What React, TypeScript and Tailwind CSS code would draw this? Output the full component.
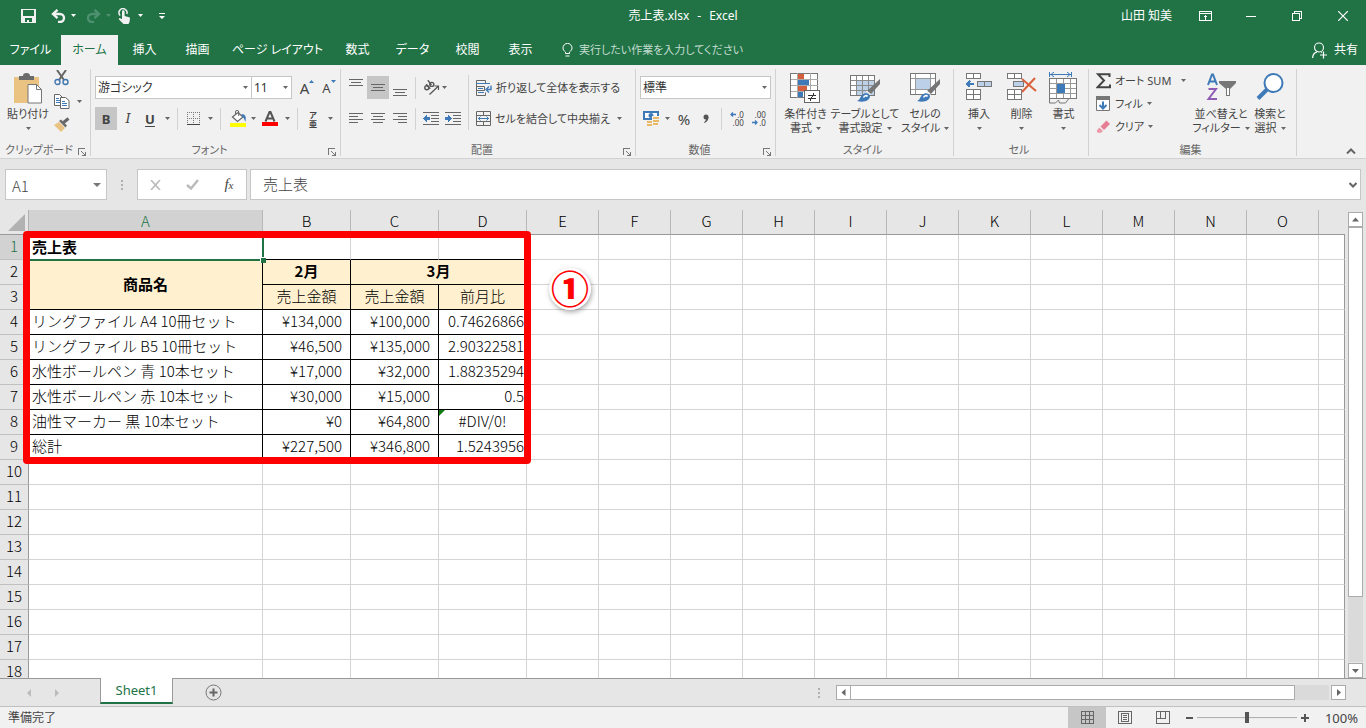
import React from 'react';

const COLUMNS = ['A', 'B', 'C', 'D', 'E', 'F', 'G', 'H', 'I', 'J', 'K', 'L', 'M', 'N', 'O'];

const PRODUCTS = [
  { name: 'リングファイル A4 10冊セット', feb: '¥134,000', mar: '¥100,000', ratio: '0.74626866' },
  { name: 'リングファイル B5 10冊セット', feb: '¥46,500', mar: '¥135,000', ratio: '2.90322581' },
  { name: '水性ボールペン 青 10本セット', feb: '¥17,000', mar: '¥32,000', ratio: '1.88235294' },
  { name: '水性ボールペン 赤 10本セット', feb: '¥30,000', mar: '¥15,000', ratio: '0.5' },
  { name: '油性マーカー 黒 10本セット', feb: '¥0', mar: '¥64,800', ratio: '#DIV/0!' },
  { name: '総計', feb: '¥227,500', mar: '¥346,800', ratio: '1.5243956' },
];

const RIBBON_TABS = [
  { name: 'ファイル', width: 'w-[61px]' },
  { name: 'ホーム', width: 'w-[57px]' },
  { name: '挿入', width: 'w-[53px]' },
  { name: '描画', width: 'w-[53px]' },
  { name: 'ページ レイアウト', width: 'w-[107px]' },
  { name: '数式', width: 'w-[53px]' },
  { name: 'データ', width: 'w-[57px]' },
  { name: '校閲', width: 'w-[53px]' },
  { name: '表示', width: 'w-[53px]' },
];

type IconProps = { w: number; h: number; crisp?: boolean; className?: string; children: React.ReactNode };

function Icon({ w, h, crisp, className = '', children }: IconProps) {
  return (
    <svg
      width={w}
      height={h}
      viewBox={`0 0 ${w} ${h}`}
      fill="none"
      shapeRendering={crisp ? 'crispEdges' : 'auto'}
      className={`shrink-0 ${className}`}
      aria-hidden="true"
    >
      {children}
    </svg>
  );
}

function Caret({ className = 'text-[#666]' }: { className?: string }) {
  return (
    <Icon w={5} h={3} className={className}>
      <path d="M0 0h5L2.5 3z" fill="currentColor" />
    </Icon>
  );
}

function CaretButton({ label, className = '' }: { label: string; className?: string }) {
  return (
    <button aria-label={label} className={`flex h-full w-3 shrink-0 items-center justify-center ${className}`}>
      <Caret />
    </button>
  );
}

function ToolButton({
  label,
  active,
  className = 'w-[22px]',
  children,
}: {
  label: string;
  active?: boolean;
  className?: string;
  children: React.ReactNode;
}) {
  return (
    <button
      aria-label={label}
      className={`flex h-[23px] shrink-0 items-center justify-center ${active ? 'bg-[#c6c6c6]' : ''} ${className}`}
    >
      {children}
    </button>
  );
}

function Separator({ className = '' }: { className?: string }) {
  return <span className={`h-[22px] w-px shrink-0 bg-[#d2d2d2] ${className}`} />;
}

function Group({
  label,
  launcher,
  className,
  children,
}: {
  label: string;
  launcher?: boolean;
  className: string;
  children: React.ReactNode;
}) {
  return (
    <section aria-label={label} className={`flex h-[87px] shrink-0 flex-col border-r border-[#d2d2d2] ${className}`}>
      <div className="flex-1">{children}</div>
      <div className="flex h-3 items-center pr-1 leading-3 text-[#666]">
        <span className="flex-1 text-center">{label}</span>
        {launcher && (
          <button aria-label={`${label}の設定`}>
            <Icon w={8} h={8} crisp className="mt-1">
              <path d="M0 7V0h7M3 3l4 4M7.5 4v3.5H4" stroke="#777" />
            </Icon>
          </button>
        )}
      </div>
    </section>
  );
}

function BigButton({
  lines,
  className,
  children,
}: {
  lines: string[];
  className: string;
  children: React.ReactNode;
}) {
  const single = lines.length === 1;
  return (
    <button className={`flex shrink-0 flex-col items-center pt-[3px] leading-[14px] whitespace-nowrap ${className}`}>
      <span className="mb-[3px] flex h-8 items-start justify-center">{children}</span>
      <span>{lines[0]}</span>
      <span className="flex h-[14px] items-center gap-1">
        {!single && lines[1]}
        <Caret />
      </span>
    </button>
  );
}

function SelectBox({ label, value, className }: { label: string; value: string; className: string }) {
  return (
    <div className={`relative h-[23px] shrink-0 ${className}`}>
      <select
        aria-label={label}
        defaultValue={value}
        className="h-full w-full appearance-none border border-[#c6c6c6] bg-white pl-[2px] text-[12px] leading-5 text-[#333]"
      >
        <option>{value}</option>
      </select>
      <Caret className="pointer-events-none absolute top-[10px] right-1 text-[#666]" />
    </div>
  );
}

function TitleBar() {
  return (
    <header className="flex h-[35px] items-center text-white">
      <div className="flex flex-1 items-center pb-1">
        <button aria-label="上書き保存" className="ml-[21px]">
          <Icon w={15} h={14} crisp>
            <path d="M0 0h15v14H0z" fill="#f1f1f1" />
            <path d="M2 1h11v6H2zM4 9h7v4H4z" fill="#217346" />
            <path d="M6 11h2v2H6z" fill="#f1f1f1" />
          </Icon>
        </button>
        <button aria-label="元に戻す" className="ml-[15px]">
          <Icon w={15} h={14}>
            <path d="M2 5h7a4 4 0 0 1 0 8H7" stroke="#f1f1f1" strokeWidth="2.4" />
            <path d="M6.5 0.8L2 5l4.5 4.2" stroke="#f1f1f1" strokeWidth="2.4" />
          </Icon>
        </button>
        <Caret className="ml-[5px] text-white" />
        <button aria-label="やり直し" className="ml-[10px]">
          <Icon w={15} h={14}>
            <path d="M13 5H6a4 4 0 0 0 0 8h2" stroke="#4e9170" strokeWidth="2.4" />
            <path d="M8.5 0.8L13 5 8.5 9.2" stroke="#4e9170" strokeWidth="2.4" />
          </Icon>
        </button>
        <Caret className="ml-[5px] text-[#4e9170]" />
        <button aria-label="タッチ/マウス モードの切り替え" className="ml-[7px]">
          <Icon w={13} h={16}>
            <path d="M2.2 7.5A4 4 0 1 1 8.8 6" stroke="#f1f1f1" strokeWidth="1.5" />
            <path
              d="M4 3.5a1.3 1.3 0 0 1 2.6 0V8l4.5 1.2c.7.2 1 .7.9 1.5L11.5 14 10.5 16H5.5L1 11.500c-.5-.7.4-1.7 1.2-1.3L4 11.3z"
              fill="#f1f1f1"
            />
          </Icon>
        </button>
        <Caret className="ml-[7px] text-white" />
        <button aria-label="クイック アクセス ツール バーのカスタマイズ" className="ml-4">
          <Icon w={6} h={6}>
            <path d="M0 3h6L3 6zM0 0h6v1H0z" fill="#fff" />
          </Icon>
        </button>
      </div>
      <h1 className="flex gap-2 pb-1">
        <span>売上表.xlsx</span>
        <span>-</span>
        <span>Excel</span>
      </h1>
      <div className="flex flex-1 items-center justify-end pb-1">
        <span className="mr-[10px]">山田 知美</span>
        <button aria-label="リボンの表示オプション" className="flex w-[46px] justify-center">
          <Icon w={13} h={10} crisp>
            <path d="M.5.5h12v9H.5zM.5 2.5h12" stroke="#fff" />
            <path d="M6.5 9V4.5M4.5 6.5l2-2 2 2" stroke="#fff" />
          </Icon>
        </button>
        <button aria-label="最小化" className="flex w-[46px] justify-center">
          <Icon w={10} h={10} crisp>
            <path d="M0 5.5h10" stroke="#fff" />
          </Icon>
        </button>
        <button aria-label="元のサイズに戻す" className="flex w-[46px] justify-center">
          <Icon w={10} h={10} crisp>
            <path d="M.5 2.5h7v7h-7zM2.5 2V.5h7v7H8" stroke="#fff" />
          </Icon>
        </button>
        <button aria-label="閉じる" className="flex w-[46px] justify-center">
          <Icon w={10} h={10}>
            <path d="M0 0l10 10M10 0L0 10" stroke="#fff" strokeWidth="1.2" />
          </Icon>
        </button>
      </div>
    </header>
  );
}

function TabBar() {
  return (
    <nav className="flex h-[30px] items-center text-white">
      {RIBBON_TABS.map((tab) => (
        <button
          key={tab.name}
          className={`h-full shrink-0 whitespace-nowrap ${tab.width} ${tab.name === 'ホーム' ? 'bg-[#f1f1f1] text-[#217346]' : ''}`}
        >
          {tab.name}
        </button>
      ))}
      <button className="ml-[15px] flex items-center gap-[6px] text-[11px] text-[#c3dccf]">
        <Icon w={11} h={14}>
          <path d="M3.5 10.5V9C2 7.8 1 6.8 1 4.9a4.4 4.4 0 0 1 9 0c0 1.9-1 2.9-2.5 4.1v1.5zM3.5 13h4" stroke="#fff" />
        </Icon>
        実行したい作業を入力してください
      </button>
      <button className="mr-2 ml-auto flex items-center gap-[7px]">
        <Icon w={15} h={17}>
          <circle cx="7" cy="5.5" r="4.5" stroke="#fff" strokeWidth="1.1" />
          <path d="M.6 16c.2-3.5 1.9-5.5 4.4-6.2M9 9.8l1 .6M11.5 9.500v7M8 13h7" stroke="#fff" strokeWidth="1.2" />
        </Icon>
        共有
      </button>
    </nav>
  );
}

function ClipboardGroup() {
  return (
    <Group label="クリップボード" launcher className="w-[91px]">
      <div className="flex pl-1">
        <BigButton lines={['貼り付け']} className="w-12">
          <Icon w={30} h={32}>
            <path d="M1 5h25v26H1z" fill="#eac282" />
            <path d="M6 4h4c0-2 1-3 3.5-3S17 2 17 4h4v4H6z" fill="#6b6b6b" />
            <path d="M15 12.5h8.5l5 5V31H15z" fill="#fff" stroke="#777" />
            <path d="M23.5 12.5v5h5" stroke="#777" />
          </Icon>
        </BigButton>
        <div className="flex flex-col gap-[7px] pt-[1px]">
          <button aria-label="切り取り" className="ml-[2px] flex h-4 w-5 items-center">
            <Icon w={15} h={16}>
              <path d="M3 0l7 10M12 0L5 10" stroke="#666" strokeWidth="2" />
              <circle cx="3.5" cy="12" r="2.5" stroke="#4177b0" strokeWidth="1.4" />
              <circle cx="11.5" cy="12" r="2.5" stroke="#4177b0" strokeWidth="1.4" />
            </Icon>
          </button>
          <div className="flex h-4 items-center gap-[7px]">
            <button aria-label="コピー" className="ml-[2px]">
              <Icon w={16} h={15}>
                <path d="M.5.5h5l3 3v8h-8z" fill="#fff" stroke="#666" />
                <path d="M2 4.5h3M2 6.5h4M2 8.5h4" stroke="#3f7ab8" />
                <path d="M6.5 3.5h5l3.5 3v8H6.5z" fill="#fff" stroke="#666" />
                <path d="M8 7.5h3M8 9.5h5M8 11.5h5" stroke="#3f7ab8" />
              </Icon>
            </button>
            <CaretButton label="コピーのオプション" className="-ml-1" />
          </div>
          <button aria-label="書式のコピー/貼り付け" className="ml-[2px] flex h-4 w-5 items-center">
            <Icon w={16} h={15}>
              <path d="M0 8l5-3 6 6-4 4z" fill="#eac282" />
              <path d="M5 4l2-1.5 6 6L11.5 10.5z" fill="#6b6b6b" />
              <path d="M9.5 5.5l5-4" stroke="#666" strokeWidth="3" />
            </Icon>
          </button>
        </div>
      </div>
    </Group>
  );
}

function FontGroup() {
  return (
    <Group label="フォント" launcher className="w-[250px]">
      <div className="flex flex-col gap-2 pt-[7px] pl-1">
        <div className="flex items-center">
          <SelectBox label="フォント" value="游ゴシック" className="w-[157px]" />
          <SelectBox label="フォント サイズ" value="11" className="-ml-px w-[41px]" />
          <ToolButton label="フォント サイズの拡大" className="ml-1 w-[22px]">
            <span className="text-[15px]">A</span>
            <Icon w={5} h={3} className="mb-3">
              <path d="M0 3h5L2.5 0z" fill="#3f7ab8" />
            </Icon>
          </ToolButton>
          <ToolButton label="フォント サイズの縮小">
            <span className="text-[13px]">A</span>
            <Icon w={5} h={3} className="mb-3">
              <path d="M0 0h5L2.5 3z" fill="#3f7ab8" />
            </Icon>
          </ToolButton>
        </div>
        <div className="flex h-[23px] items-center">
          <ToolButton label="太字" active>
            <span className="text-[13px] font-bold">B</span>
          </ToolButton>
          <ToolButton label="斜体">
            <span className="font-['DejaVu_Serif',serif] text-[13px] italic">I</span>
          </ToolButton>
          <ToolButton label="下線">
            <span className="text-[13px] leading-[14px] font-bold underline underline-offset-2">U</span>
          </ToolButton>
          <CaretButton label="下線のオプション" />
          <Separator className="mx-1" />
          <ToolButton label="罫線">
            <Icon w={13} h={13} crisp>
              <path d="M.5 0v12M6.5 0v12M12.5 0v12M0 .5h13M0 6.5h13" stroke="#777" strokeDasharray="1 1" />
              <path d="M0 12.5h13" stroke="#444" />
            </Icon>
          </ToolButton>
          <CaretButton label="罫線のオプション" />
          <Separator className="mx-1" />
          <ToolButton label="塗りつぶしの色" className="w-[26px]">
            <Icon w={17} h={17}>
              <path d="M2.5 7L8 2.5l5 4.5-5.5 4.5z" fill="#fff" stroke="#666" strokeWidth="1.2" />
              <path d="M5.5 5V2a1.600 1.600 0 0 1 3.200 0v4" stroke="#666" />
              <path d="M11.500 4c4 0 5 3 4 7.500-1-.5-1-3.500-3-4.500z" fill="#3f7ab8" />
              <path d="M0 13h16v4H0z" fill="#ff0" />
            </Icon>
          </ToolButton>
          <CaretButton label="塗りつぶしのオプション" className="-ml-1" />
          <ToolButton label="フォントの色">
            <Icon w={16} h={15}>
              <path d="M3.5 10.5L7.5 1h1l4 9.5M5 7.5h6" stroke="#555" strokeWidth="2" />
              <path d="M0 11h16v4H0z" fill="#f00" />
            </Icon>
          </ToolButton>
          <CaretButton label="フォントの色のオプション" />
          <Separator className="mx-1" />
          <ToolButton label="ふりがなの表示">
            <span className="flex flex-col items-center text-[8px] leading-[9px] font-bold">
              <span>ア</span>
              <span>亜</span>
            </span>
          </ToolButton>
          <CaretButton label="ふりがなのオプション" />
        </div>
      </div>
    </Group>
  );
}

function AlignmentGroup() {
  return (
    <Group label="配置" launcher className="w-[295px]">
      <div className="flex pl-1">
        <div className="flex flex-col gap-2 pt-[7px]">
          <div className="flex h-[23px] items-center">
            <ToolButton label="上揃え">
              <Icon w={14} h={17} crisp>
                <path d="M0 .5h14M2 3.5h10M0 6.5h14" stroke="#666" />
              </Icon>
            </ToolButton>
            <ToolButton label="上下中央揃え" active>
              <Icon w={14} h={8} crisp>
                <path d="M0 .5h14M2 3.5h10M0 6.5h14" stroke="#666" />
              </Icon>
            </ToolButton>
            <ToolButton label="下揃え">
              <Icon w={14} h={17} crisp>
                <path d="M0 10.5h14M2 13.5h10M0 16.5h14" stroke="#666" />
              </Icon>
            </ToolButton>
            <Separator className="mx-1" />
            <ToolButton label="方向">
              <Icon w={17} h={16}>
                <g stroke="#555" strokeWidth="1.4">
                  <circle cx="3.800" cy="7.800" r="2" />
                  <path d="M3.200 4.200l4 4.600" />
                  <circle cx="8.800" cy="4.400" r="2" />
                  <path d="M4.800.2l3.600 4.800" />
                  <path d="M6.500 14.500L15 6.500M11.500 6H15.500V10" strokeWidth="1.200" />
                </g>
              </Icon>
            </ToolButton>
            <CaretButton label="方向のオプション" className="-ml-1" />
          </div>
          <div className="flex h-[23px] items-center">
            <ToolButton label="左揃え">
              <Icon w={14} h={11} crisp>
                <path d="M0 .5h14M0 3.5h9M0 6.5h14M0 9.5h9" stroke="#666" />
              </Icon>
            </ToolButton>
            <ToolButton label="中央揃え">
              <Icon w={14} h={11} crisp>
                <path d="M0 .5h14M2 3.5h10M0 6.5h14M2 9.5h10" stroke="#666" />
              </Icon>
            </ToolButton>
            <ToolButton label="右揃え">
              <Icon w={14} h={11} crisp>
                <path d="M0 .5h14M5 3.5h9M0 6.5h14M5 9.5h9" stroke="#666" />
              </Icon>
            </ToolButton>
            <Separator className="mx-1" />
            <ToolButton label="インデントを減らす">
              <Icon w={16} h={13} crisp>
                <path d="M0 .5h16M8 3.5h8M8 6.5h8M8 9.5h8M0 12.5h16" stroke="#666" />
                <path d="M0 6.5l4-3.5v2h3v3H4v2z" fill="#3f7ab8" />
              </Icon>
            </ToolButton>
            <ToolButton label="インデントを増やす">
              <Icon w={16} h={13} crisp>
                <path d="M0 .5h16M8 3.5h8M8 6.5h8M8 9.5h8M0 12.5h16" stroke="#666" />
                <path d="M7 6.5L3 3v2H0v3h3v2z" fill="#3f7ab8" />
              </Icon>
            </ToolButton>
          </div>
        </div>
        <Separator className="mt-[6px] ml-1 h-[55px]" />
        <div className="flex flex-col items-start gap-2 pt-[7px] pl-[7px] text-[#444]">
          <button className="flex h-[23px] items-center gap-1 whitespace-nowrap">
            <Icon w={16} h={16}>
              <path d="M.5.5h9v3h-9zM.5 3.5v12M.5 6.5h8v4h-8M.5 15.5h9v-3" stroke="#666" />
              <path d="M0 3.5h14M2 8.5h5M2 12.5h6" stroke="#3f7ab8" />
              <path d="M15 5.5v4h-4M13 6.5l-3 3 3 3" stroke="#3f7ab8" strokeWidth="1.4" />
            </Icon>
            折り返して全体を表示する
          </button>
          <div className="flex h-[23px] items-center">
            <button className="flex items-center gap-1 whitespace-nowrap">
              <Icon w={15} h={15}>
                <path d="M.5.5h14v14H.5zM.5 4.5h14M.5 10.5h14M7.5.5v4M7.5 10.5v4" stroke="#666" />
                <path d="M2 7.5h11M4.5 5.5l-2 2 2 2M10.5 5.5l2 2-2 2" stroke="#3f7ab8" />
              </Icon>
              セルを結合して中央揃え
            </button>
            <CaretButton label="結合のオプション" className="ml-1" />
          </div>
        </div>
      </div>
    </Group>
  );
}

function NumberGroup() {
  return (
    <Group label="数値" launcher className="w-[140px]">
      <div className="flex flex-col gap-2 pt-[7px] pl-1">
        <SelectBox label="表示形式" value="標準" className="w-[131px]" />
        <div className="flex h-[23px] items-center">
          <ToolButton label="通貨表示形式">
            <Icon w={17} h={17}>
              <path d="M0 1h16v9H0z" fill="#3f7ab8" />
              <path d="M2 3h12v5H2z" fill="#fff" />
              <circle cx="8" cy="5.5" r="2.5" fill="#3f7ab8" />
              <path d="M9 6h8v11H9zM4 10h6v7H4z" fill="#f1f1f1" />
              <path d="M10 7h6v2h-6zM10 10h6v2h-6zM10 13h5v2h-5zM4 11h5v2H4zM4 14h5v2H4z" fill="#eab968" />
            </Icon>
          </ToolButton>
          <CaretButton label="通貨のオプション" className="-ml-px" />
          <ToolButton label="パーセント スタイル">
            <span className="text-[15px]">%</span>
          </ToolButton>
          <ToolButton label="桁区切りスタイル">
            <Icon w={6} h={9} className="mb-px">
              <circle cx="3" cy="3" r="2.5" fill="#555" />
              <path d="M5.5 3c0 3-1.5 5-4 6l-.5-.8C2.5 7.3 3 6 3 4.5z" fill="#555" />
            </Icon>
          </ToolButton>
          <Separator className="mx-1" />
          <ToolButton label="小数点以下の表示桁数を増やす">
            <span className="flex flex-col items-end text-[8px] leading-2">
              <span className="flex items-center gap-px">
                <Icon w={6} h={5}>
                  <path d="M6 2.5H1M3 .5l-2 2 2 2" stroke="#3f7ab8" strokeWidth="1.3" />
                </Icon>
                .0
              </span>
              <span>.00</span>
            </span>
          </ToolButton>
          <ToolButton label="小数点以下の表示桁数を減らす">
            <span className="flex flex-col items-end text-[8px] leading-2">
              <span>.00</span>
              <span className="flex items-center gap-px">
                <Icon w={6} h={5}>
                  <path d="M0 2.5h5M3 .5l2 2-2 2" stroke="#3f7ab8" strokeWidth="1.3" />
                </Icon>
                .0
              </span>
            </span>
          </ToolButton>
        </div>
      </div>
    </Group>
  );
}

function Brush() {
  return (
    <>
      <path d="M30 7v5l-9 10-4-3z" fill="#757575" />
      <path d="M16.500 19l4 3.500" stroke="#f1f1f1" strokeWidth="1.200" />
      <path d="M7 29c3-1 3-4 5-6 3-3 7-2 8 1 0 4-5 7-13 5z" fill="#3f7ab8" />
      <path d="M13.500 25.500c1-2 3-2.500 4-1" stroke="#fff" strokeWidth="1.500" />
    </>
  );
}

function StylesGroup() {
  return (
    <Group label="スタイル" className="w-[178px]">
      <div className="flex pl-[5px]">
        <BigButton lines={['条件付き', '書式']} className="w-[49px]">
          <Icon w={31} h={31} crisp>
            <path d="M.5 1.5h27v24H.5z" fill="#fff" stroke="#777" />
            <path d="M7.5 1v25M20.5 1v25M.5 7.5h27M.5 13.5h27M.5 19.5h27" stroke="#aaa" />
            <path d="M8 2h6v5H8zM8 14h9v5H8z" fill="#d35f3e" />
            <path d="M8 8h11v5H8zM8 20h5v5H8z" fill="#3f7ab8" />
            <path d="M14.5 18.5h15v12h-15z" fill="#fff" stroke="#666" />
            <path d="M18 23.5h8M18 26.5h8M24 21l-4 8" stroke="#333" />
          </Icon>
        </BigButton>
        <BigButton lines={['テーブルとして', '書式設定']} className="w-[70px]">
          <Icon w={31} h={31}>
            <g shapeRendering="crispEdges">
              <path d="M.5 3.5h24v20H.5z" fill="#fff" stroke="#777" />
              <path d="M7 9h17v14H7z" fill="#bcd0e8" />
              <path d="M6.5 4v19M12.5 4v19M18.5 4v19M1 8.5h23M1 13.5h23M1 18.5h23" stroke="#8a8a8a" />
            </g>
            <Brush />
          </Icon>
        </BigButton>
        <BigButton lines={['セルの', 'スタイル']} className="w-[50px]">
          <Icon w={31} h={31}>
            <g shapeRendering="crispEdges">
              <path d="M.5 1.5h25v21H.5z" fill="#fff" stroke="#777" />
              <path d="M6 7h14v10H6z" fill="#bcd0e8" />
              <path d="M5.5 2v20M20.5 2v20M1 6.5h24M1 17.5h24" stroke="#999" />
            </g>
            <Brush />
          </Icon>
        </BigButton>
      </div>
    </Group>
  );
}

function CellsGroup() {
  return (
    <Group label="セル" className="w-[135px]">
      <div className="flex pl-1">
        <BigButton lines={['挿入']} className="w-[42px]">
          <Icon w={27} h={29} crisp>
            <path d="M.5 1.5h14v5H.5zM7.5 1.5v5M.5 17.5h14v10H.5zM7.5 17.5v10M.5 22.5h14" fill="#fff" stroke="#777" />
            <path d="M11.5 9.5h14v5h-14zM18.5 9.5v5" fill="#bcd0e8" stroke="#777" />
            <path d="M1 12h7M4 9l-3 3 3 3" stroke="#3f7ab8" strokeWidth="2" />
          </Icon>
        </BigButton>
        <BigButton lines={['削除']} className="w-[43px]">
          <Icon w={30} h={29}>
            <g shapeRendering="crispEdges">
              <path d="M.5 1.5h14v5H.5zM7.5 1.5v5M.5 17.5h14v10H.5zM7.5 17.5v10M.5 22.5h14" fill="#fff" stroke="#777" />
              <path d="M6.5 9.5h10v5h-10z" fill="#bcd0e8" stroke="#777" />
            </g>
            <path d="M15 7l14 12M28 6L15 20" stroke="#d9603b" strokeWidth="2" />
          </Icon>
        </BigButton>
        <BigButton lines={['書式']} className="w-[41px]">
          <Icon w={29} h={32}>
            <g shapeRendering="crispEdges">
              <path d="M.5 0v5M22.5 0v5M1 2.5h21" stroke="#3f7ab8" />
              <path d="M.5 6.5h27v20H.5z" fill="#fff" stroke="#777" />
              <path d="M7.5 7v19M14.500 7v19M21.5 7v19M1 11.5h26M1 16.5h26M1 21.5h26" stroke="#999" />
              <path d="M8 12h8v9H8z" fill="#3f7ab8" />
            </g>
            <path d="M5 0L2 2.500 5 5M18 0l3 2.500L18 5" stroke="#3f7ab8" />
            <path d="M.5 27v4h6l3-3 1 3h6l3-4" stroke="#777" />
          </Icon>
        </BigButton>
      </div>
    </Group>
  );
}

function EditingGroup() {
  return (
    <Group label="編集" className="w-[208px]">
      <div className="flex pl-[7px]">
        <div className="flex w-[99px] flex-col items-start">
          <div className="flex h-[23px] items-center">
            <button className="flex items-center gap-1 whitespace-nowrap">
              <Icon w={15} h={16}>
                <path d="M13.5 4V1.2H2l6 6.3-6.5 6.800H14V11.5" stroke="#444" strokeWidth="2" />
              </Icon>
              オート SUM
            </button>
            <CaretButton label="オート SUM のオプション" className="ml-[6px]" />
          </div>
          <button className="flex h-[23px] items-center gap-1 whitespace-nowrap">
            <Icon w={15} h={15}>
              <path d="M.5.5h13v14H.5z" fill="#fff" stroke="#777" />
              <path d="M0 0h14v4H0z" fill="#777" />
              <path d="M7 5.5v7M3.5 9L7 12.5 10.5 9" stroke="#3f7ab8" strokeWidth="2" />
            </Icon>
            フィル
            <Caret />
          </button>
          <button className="flex h-[23px] items-center gap-1 whitespace-nowrap">
            <Icon w={15} h={14}>
              <path d="M4.500 6.500L10.500.5 14 4 8 10z" fill="#e67f93" />
              <path d="M3.500 7.500L7 11 4.500 13 1 12.500V10z" fill="#ee9aaa" />
            </Icon>
            クリア
            <Caret />
          </button>
        </div>
        <BigButton lines={['並べ替えと', 'フィルター']} className="w-[52px]">
          <Icon w={30} h={29}>
            <path d="M2 13L6 2.5h1L11 13M3.5 9.5h6" stroke="#3f7ab8" strokeWidth="2" />
            <path d="M2.500 17h7.500L2.500 27H11" stroke="#8e5bb5" strokeWidth="2" />
            <path d="M13 9h17v2l-6 6v7h-4v-7l-7-6z" fill="#777" />
            <path d="M21 16h2v7h-2z" fill="#fff" />
          </Icon>
        </BigButton>
        <BigButton lines={['検索と', '選択']} className="w-[46px]">
          <Icon w={29} h={29}>
            <circle cx="17.5" cy="11" r="9" fill="#fff" stroke="#3f7ab8" strokeWidth="2" />
            <path d="M11 17.5L2 26.5" stroke="#3f7ab8" strokeWidth="4" />
          </Icon>
        </BigButton>
      </div>
    </Group>
  );
}

function Ribbon() {
  return (
    <div className="flex h-[94px] border-b border-[#d2d2d2] bg-[#f1f1f1] pt-1 text-[11px] text-[#444]">
      <ClipboardGroup />
      <FontGroup />
      <AlignmentGroup />
      <NumberGroup />
      <StylesGroup />
      <CellsGroup />
      <EditingGroup />
      <button aria-label="リボンを折りたたむ" className="mr-[10px] mb-1 ml-auto self-end">
        <Icon w={10} h={6}>
          <path d="M1 5.5l4-4 4 4" stroke="#666" strokeWidth="2" />
        </Icon>
      </button>
    </div>
  );
}

function FormulaBar() {
  return (
    <div className="flex h-[51px] gap-[3px] bg-[#e6e6e6] pt-[10px] pr-[5px] pl-[5px] text-[#444]">
      <div className="flex h-[31px] w-[102px] items-center border border-[#c6c6c6] bg-white pr-[5px] pl-[6px]">
        <input
          aria-label="名前ボックス"
          defaultValue="A1"
          className="w-full min-w-0 pt-[2px] font-['Noto_Sans_CJK_JP',sans-serif] text-[15px] font-light outline-none"
        />
        <button aria-label="名前の一覧">
          <Icon w={8} h={4}>
            <path d="M0 0h8L4 4z" fill="#777" />
          </Icon>
        </button>
      </div>
      <span className="flex h-[31px] w-6 items-center justify-center">
        <Icon w={2} h={10} crisp>
          <path d="M0 0h2v2H0zM0 4h2v2H0zM0 8h2v2H0z" fill="#b0b0b0" />
        </Icon>
      </span>
      <div className="flex h-[31px] w-[110px] items-center justify-around border border-[#c6c6c6] bg-white">
        <button aria-label="キャンセル">
          <Icon w={11} h={10}>
            <path d="M1 0l9 10M10 0L1 10" stroke="#bbb" strokeWidth="1.6" />
          </Icon>
        </button>
        <button aria-label="入力">
          <Icon w={13} h={11}>
            <path d="M1 6l4 3.5L12 1" stroke="#bbb" strokeWidth="2.4" />
          </Icon>
        </button>
        <button aria-label="関数の挿入" className="font-['Liberation_Serif',serif] text-[15px] leading-4 italic">
          f<span className="text-[11px]">x</span>
        </button>
      </div>
      <div className="flex h-[31px] flex-1 items-center border border-[#c6c6c6] bg-white pr-[3px] pl-3">
        <input
          aria-label="数式バー"
          defaultValue="売上表"
          className="flex-1 pb-[2px] font-['Noto_Sans_CJK_JP',sans-serif] text-[15px] font-light outline-none"
        />
        <button aria-label="数式バーの展開">
          <Icon w={8} h={6}>
            <path d="M.5 1L4 4.5 7.5 1" stroke="#666" strokeWidth="2" />
          </Icon>
        </button>
      </div>
    </div>
  );
}

const GRID = 'border-r border-b border-[#d4d4d4]';
const BOXED = 'border-r border-b border-black';

function BlankCells({ from }: { from: number }) {
  return (
    <>
      {COLUMNS.slice(from).map((col) => (
        <td key={col} className={`${GRID} p-0`} />
      ))}
      <td className="border-r border-b border-r-[#999] border-b-[#d4d4d4] p-0" />
    </>
  );
}

function RowHeader({ row }: { row: number }) {
  return (
    <th
      scope="row"
      className={`border-r border-b border-r-[#999] border-b-[#c0c0c0] p-0 pb-[2px] text-center font-light ${row === 1 ? 'bg-[#d2d2d2] text-[#217346]' : 'bg-[#e6e6e6]'}`}
    >
      {row}
    </th>
  );
}

function Sheet() {
  return (
    <div className="relative min-w-0 flex-1 overflow-hidden">
      <table className="w-full table-fixed border-separate border-spacing-0 bg-white font-['Noto_Sans_CJK_JP',sans-serif] text-[15px] leading-5 font-light text-black [font-feature-settings:normal]">
        <colgroup>
          <col className="w-[29px]" />
          <col className="w-[234px]" />
          <col className="w-[88px]" />
          <col className="w-[88px]" />
          <col className="w-[88px]" />
          {COLUMNS.slice(4).map((col) => (
            <col key={col} className="w-[72px]" />
          ))}
          <col />
        </colgroup>
        <thead>
          <tr className="h-[25px] bg-[#e6e6e6]">
            <th className="border-r border-b border-r-[#b0b0b0] border-b-[#999] p-0">
              <Icon w={18} h={17} className="ml-2">
                <path d="M17 0v17H0z" fill="#b2b2b2" />
              </Icon>
            </th>
            {COLUMNS.map((col) => (
              <th
                key={col}
                scope="col"
                className={`border-r border-b border-r-[#b8b8b8] border-b-[#999] p-0 pb-[2px] font-light ${col === 'A' ? 'bg-[#d2d2d2] text-[#217346]' : ''}`}
              >
                {col}
              </th>
            ))}
            <th className="border-b border-[#999] p-0" />
          </tr>
        </thead>
        <tbody>
          <tr className="h-[25px]">
            <RowHeader row={1} />
            <td className="relative p-0 pb-[2px] pl-[3px] font-bold">
              売上表
              <span className="absolute top-0 -right-px -bottom-px left-0 border-r-2 border-b-2 border-[#217346]" />
              <span className="absolute -right-[3px] -bottom-[3px] z-10 h-[6px] w-[6px] border-t border-l border-white bg-[#217346]" />
            </td>
            <td className="border-r border-b border-r-[#d4d4d4] border-b-black p-0" />
            <td className="border-r border-b border-r-[#d4d4d4] border-b-black p-0" />
            <td className="border-r border-b border-r-[#d4d4d4] border-b-black p-0" />
            <BlankCells from={4} />
          </tr>
          <tr className="h-[25px] text-center">
            <RowHeader row={2} />
            <td rowSpan={2} className={`${BOXED} bg-[#fff1cf] p-0 pb-[2px] font-bold`}>
              商品名
            </td>
            <td className={`${BOXED} bg-[#fff1cf] p-0 pb-[2px] font-bold`}>2月</td>
            <td colSpan={2} className={`${BOXED} bg-[#fff1cf] p-0 pb-[2px] font-bold`}>
              3月
            </td>
            <BlankCells from={4} />
          </tr>
          <tr className="h-[25px] text-center">
            <RowHeader row={3} />
            <td className={`${BOXED} bg-[#fff1cf] p-0 pb-[2px]`}>売上金額</td>
            <td className={`${BOXED} bg-[#fff1cf] p-0 pb-[2px]`}>売上金額</td>
            <td className={`${BOXED} bg-[#fff1cf] p-0 pb-[2px]`}>前月比</td>
            <BlankCells from={4} />
          </tr>
          {PRODUCTS.map((item, i) => (
            <tr key={item.name} className="h-[25px] text-right">
              <RowHeader row={i + 4} />
              <td className={`${BOXED} p-0 pb-[2px] pl-[3px] text-left whitespace-nowrap`}>{item.name}</td>
              <td className={`${BOXED} p-0 pr-2 pb-[2px]`}>{item.feb}</td>
              <td className={`${BOXED} p-0 pr-2 pb-[2px]`}>{item.mar}</td>
              {item.ratio.startsWith('#') ? (
                <td className={`${BOXED} relative p-0 pb-[2px] text-center`}>
                  <Icon w={6} h={6} className="absolute top-0 left-0">
                    <path d="M0 0h6L0 6z" fill="#107c10" />
                  </Icon>
                  {item.ratio}
                </td>
              ) : (
                <td className={`${BOXED} p-0 pr-[2px] pb-[2px]`}>{item.ratio}</td>
              )}
              <BlankCells from={4} />
            </tr>
          ))}
          {Array.from({ length: 9 }, (_, i) => (
            <tr key={i} className="h-[25px]">
              <RowHeader row={i + 10} />
              <BlankCells from={0} />
            </tr>
          ))}
        </tbody>
      </table>
      {/* Callout over the sales table */}
      <div className="pointer-events-none absolute top-[21px] left-[23px] z-20 h-[233px] w-[508px] rounded-[4px] border-[7px] border-[#f00]" />
      <div className="absolute top-[58px] left-[549px] flex h-[42px] w-[42px] items-center justify-center rounded-full bg-white pb-1 font-['Noto_Sans_CJK_JP',sans-serif] text-[38px] leading-[38px] font-black text-[#f00] shadow-[1px_2px_5px_rgba(0,0,0,0.35)]">
        ①
      </div>
    </div>
  );
}

function ScrollButton({ label, d }: { label: string; d: string }) {
  return (
    <button
      aria-label={label}
      className="flex h-[15px] w-[15px] shrink-0 items-center justify-center border border-[#ababab] bg-white"
    >
      <Icon w={7} h={7}>
        <path d={d} fill="#666" />
      </Icon>
    </button>
  );
}

function VerticalScroll() {
  return (
    <div className="flex w-[21px] shrink-0 flex-col items-center bg-[#e6e6e6] pt-[2px]">
      <ScrollButton label="上へスクロール" d="M0 5.5h7L3.5 1.5z" />
      <div className="-mt-px mb-px flex w-[15px] flex-1 flex-col bg-[#dadada]">
        <div className="h-[85%] border border-t-2 border-[#ababab] bg-white" />
      </div>
      <ScrollButton label="下へスクロール" d="M0 2h7L3.5 6z" />
    </div>
  );
}

function SheetTabs() {
  return (
    <div className="flex h-7 shrink-0 items-center border-t border-[#999] bg-[#e6e6e6]">
      <div className="flex w-[100px] gap-6 pl-[27px]">
        <button aria-label="前のシート">
          <Icon w={4} h={8}>
            <path d="M4 0v8L0 4z" fill="#bbb" />
          </Icon>
        </button>
        <button aria-label="次のシート">
          <Icon w={4} h={8}>
            <path d="M0 0v8l4-4z" fill="#bbb" />
          </Icon>
        </button>
      </div>
      <button className="-mt-px h-[26px] w-[73px] self-start border-r border-b-2 border-l border-r-[#999] border-b-[#217346] border-l-[#999] bg-white text-[13px] text-[#217346]">
        Sheet1
      </button>
      <button aria-label="新しいシート" className="ml-8">
        <Icon w={17} h={17}>
          <circle cx="8.5" cy="8.5" r="7.5" stroke="#777" />
          <path d="M8.5 4.5v8M4.5 8.5h8" stroke="#666" strokeWidth="2" />
        </Icon>
      </button>
      <div className="mr-5 ml-auto flex w-[528px] items-center">
        <Icon w={2} h={10} crisp className="mr-4">
          <path d="M0 0h2v2H0zM0 4h2v2H0zM0 8h2v2H0z" fill="#b0b0b0" />
        </Icon>
        <ScrollButton label="左へスクロール" d="M5.5 0v7L1.5 3.5z" />
        <div className="mr-[2px] -ml-px h-[15px] flex-1 bg-[#dadada]">
          <div className="h-full w-[93%] border border-[#ababab] bg-white" />
        </div>
        <ScrollButton label="右へスクロール" d="M2 0v7l4-3.5z" />
      </div>
    </div>
  );
}

function StatusBar() {
  return (
    <footer className="flex h-[22px] shrink-0 items-center border-t border-[#c0c0c0] bg-[#f1f1f1] pr-2 pl-2 text-[#444]">
      <span className="flex-1">準備完了</span>
      <button aria-label="標準" className="flex h-full w-[38px] items-center justify-center bg-[#c6c6c6]">
        <Icon w={13} h={13} crisp>
          <path d="M.5.5h12v12H.5zM4.5.5v12M8.5.5v12M.5 4.5h12M.5 8.5h12" stroke="#666" />
        </Icon>
      </button>
      <button aria-label="ページ レイアウト表示" className="flex h-full w-[38px] items-center justify-center">
        <Icon w={14} h={13} crisp>
          <path d="M.5.5h13v12H.5zM3.5 2.5h7v8h-7zM5 4.5h4M5 6.5h4M5 8.5h4" stroke="#666" />
        </Icon>
      </button>
      <button aria-label="改ページ プレビュー" className="flex h-full w-[38px] items-center justify-center">
        <Icon w={14} h={13} crisp>
          <path d="M.5.5h13v12H.5zM4.5.5v7M9.5.5v7M.5 7.5h9" stroke="#666" />
        </Icon>
      </button>
      <button aria-label="縮小" className="ml-1">
        <Icon w={7} h={7} crisp>
          <path d="M0 3h7v2H0z" fill="#555" />
        </Icon>
      </button>
      <input
        type="range"
        aria-label="ズーム"
        min={0}
        max={100}
        defaultValue={50}
        className="mx-1 h-3 w-[100px] appearance-none bg-linear-to-b from-transparent from-45% via-[#aaa] via-45% to-transparent to-55% [&::-webkit-slider-thumb]:h-[11px] [&::-webkit-slider-thumb]:w-1 [&::-webkit-slider-thumb]:appearance-none [&::-webkit-slider-thumb]:bg-[#555]"
      />
      <button aria-label="拡大">
        <Icon w={8} h={8} crisp>
          <path d="M0 3h8v2H0zM3 0h2v8H3z" fill="#555" />
        </Icon>
      </button>
      <button className="w-[49px] text-right text-[13px]">100%</button>
    </footer>
  );
}

export default function App() {
  return (
    <div className="flex h-screen w-full flex-col overflow-hidden bg-[#e6e6e6] font-['Noto_Sans','Noto_Sans_CJK_JP',sans-serif] text-[12px] leading-4 [font-feature-settings:'palt']">
      <div className="shrink-0 bg-[#217346]">
        <TitleBar />
        <TabBar />
        <Ribbon />
      </div>
      <FormulaBar />
      <main className="flex min-h-0 flex-1">
        <Sheet />
        <VerticalScroll />
      </main>
      <SheetTabs />
      <StatusBar />
    </div>
  );
}
